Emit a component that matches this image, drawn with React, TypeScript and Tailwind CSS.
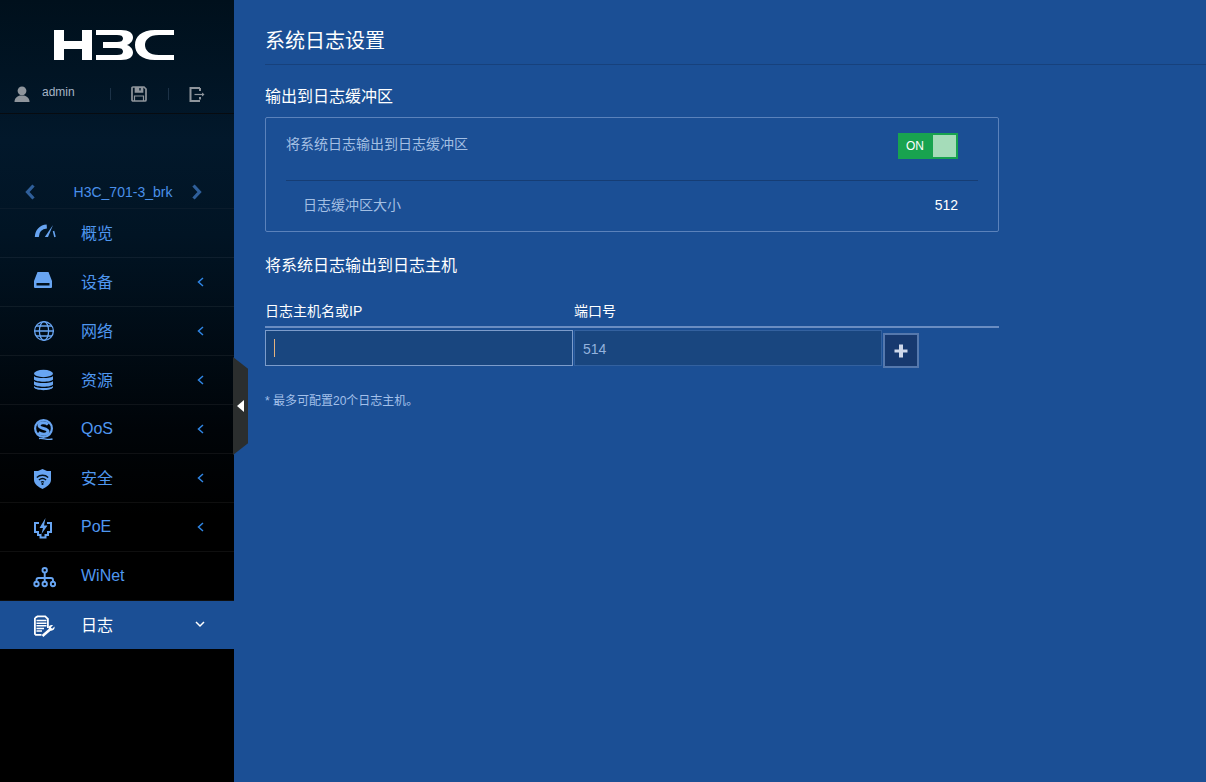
const font = "font-['Liberation_Sans','Noto_Sans_CJK_SC',sans-serif]";

function Chevron({ dir, className }: { dir: "left" | "down"; className?: string }) {
  const points = { left: "9,3 4.5,7 9,11", down: "3,5 7,9 11,5" }[dir];
  return (
    <svg viewBox="0 0 14 14" className={className} fill="none" stroke="currentColor" strokeWidth="1.5">
      <polyline points={points} />
    </svg>
  );
}

const icons: Record<string, React.ReactNode> = {
  gauge: (
    <>
      <path d="M4.8 16C5 10 9 6 14.8 5.6" fill="none" stroke="currentColor" strokeWidth="4" />
      <path d="M12.8 16L21 4 16 16Z" fill="currentColor" />
      <path d="M21.5 10L23 16" fill="none" stroke="currentColor" strokeWidth="1.5" />
    </>
  ),
  drive: (
    <path
      fill="currentColor"
      fillRule="evenodd"
      d="M5.5 2H16.5L20 11V17A1 1 0 0 1 19 18H3A1 1 0 0 1 2 17V11ZM4.5 13H17.5V15.5H4.5Z"
    />
  ),
  globe: (
    <g fill="none" stroke="currentColor" strokeWidth="1.3">
      <circle cx="12" cy="12" r="9.4" />
      <ellipse cx="12" cy="12" rx="4.6" ry="9.4" />
      <path d="M4 7H20M4 17H20M2.6 12H21.4" />
    </g>
  ),
  database: (
    <g fill="currentColor">
      <ellipse cx="11.5" cy="5.5" rx="9.5" ry="3.7" />
      <path d="M2 8C4 10.8 19 10.8 21 8V11.5C19 14.5 4 14.5 2 11.5Z" />
      <path d="M2 13C4 15.8 19 15.8 21 13V16.5C19 19.5 4 19.5 2 16.5Z" />
      <path d="M2 18C4 20.8 19 20.8 21 18V19.5C19 23 4 23 2 19.5Z" />
    </g>
  ),
  qos: (
    <g fill="none" stroke="currentColor">
      <circle cx="11.5" cy="11.5" r="8.4" strokeWidth="2.2" />
      <path d="M16 7.5C13.5 5 7 5.2 7 8.5C7 12 16 11 16 14.5C16 18 9.5 18 6.5 15.5" strokeWidth="3" />
      <path d="M7 21.5C11 20.5 15 23.5 20.5 22" strokeWidth="1.3" />
    </g>
  ),
  shield: (
    <>
      <path fill="currentColor" d="M10.5 3L15 5H19V14C19 18 14 21.5 10.5 23C7 21.5 2 18 2 14V5H6Z" />
      <g fill="none" stroke="#021018" strokeWidth="1.3">
        <path d="M4.8 11.5C8 8.5 13 8.5 16.2 11.5" />
        <path d="M6.9 14C9 12.2 12 12.2 14.1 14" />
        <path d="M9 16.2C10 15.5 11 15.5 12 16.2" />
      </g>
      <circle cx="10.5" cy="18" r="1.1" fill="#021018" />
    </>
  ),
  poe: (
    <>
      <path
        fill="none"
        stroke="currentColor"
        strokeWidth="2"
        d="M7 8H3V17H6V20H8.5V22.5H13.5V20H16V17H19V8H15"
      />
      <path fill="currentColor" d="M13.5 3L7.5 13H11L9.5 19L15.5 10.5H12Z" />
    </>
  ),
  winet: (
    <g fill="none" stroke="currentColor" strokeWidth="1.9">
      <circle cx="12.7" cy="6.2" r="2.2" />
      <path d="M12.7 8.4V17.8M4.5 17.8V16A2 2 0 0 1 6.5 14H19A2 2 0 0 1 21 16V17.8" />
      <circle cx="4.5" cy="20" r="2.2" />
      <circle cx="12.7" cy="20" r="2.2" />
      <circle cx="21" cy="20" r="2.2" />
    </g>
  ),
  log: (
    <>
      <path fill="none" stroke="#fff" strokeWidth="1.8" d="M2.9 5L5.5 3.4H13.2L15.9 6V15M9.5 21.9H3.8L2.9 21V5" />
      <path stroke="#fff" strokeWidth="1.5" d="M4.5 7.6H14.5M4.5 10.2H14.5M4.5 12.8H14.5M4.5 15.4H12M4.5 18H10" />
      <path stroke="#fff" strokeWidth="2.6" d="M10.5 23L18 16.5" />
      <path fill="#fff" d="M16.5 15C16.5 12.6 19 11.4 21 12.2L18.8 14.4L20.2 15.8L22.6 13.6C23 16.4 20.8 18.4 18 17.6Z" />
    </>
  ),
};

const menu = [
  { label: "概览", icon: "gauge", cjk: true },
  { label: "设备", icon: "drive", arrow: true, cjk: true },
  { label: "网络", icon: "globe", arrow: true, cjk: true },
  { label: "资源", icon: "database", arrow: true, cjk: true },
  { label: "QoS", icon: "qos", arrow: true },
  { label: "安全", icon: "shield", arrow: true, cjk: true },
  { label: "PoE", icon: "poe", arrow: true },
  { label: "WiNet", icon: "winet" },
];

function H3CLogo() {
  return (
    <svg viewBox="0 0 120 30" className="ml-[54px] h-[30px] w-[120px]" fill="#fff">
      <path d="M0 0H10V11H28V0H38V30H28V19H10V30H0Z" />
      <path d="M42 0H67C75 0 79 3 79 7.5C79 11 76 14 73 15C76 16 79 19 79 22.5C79 27 75 30 67 30H42V25H63C67 25 69 24 69 21.5C69 19 67 18 63 18H49V12H63C67 12 69 11 69 8.5C69 6 67 5 63 5H42Z" />
      <path d="M120 0H101C87 0 81 7 81 15C81 23 87 30 101 30H120V25H105C95 25 91 20 91 15C91 10 95 5 105 5H120Z" />
    </svg>
  );
}

function Sidebar() {
  return (
    <aside className="relative w-[234px] shrink-0 bg-[linear-gradient(180deg,#00101c_0%,#02182b_18%,#011424_30%,#000408_55%,#000000_66%)]">
      <div className="h-[114px] border-b border-[#070b10] pt-[30px]">
        <H3CLogo />
        <div className="mt-[25px] flex h-[18px] items-center text-[#8f959c]">
          <svg viewBox="0 0 16 16" className="ml-[14px] h-[16px] w-[16px]" fill="currentColor">
            <circle cx="8" cy="4.8" r="4.4" />
            <path d="M0.5 16C0.5 11.8 3.5 10.2 6 9.5H10C12.5 10.2 15.5 11.8 15.5 16Z" />
          </svg>
          <span className="mb-[5px] ml-[12px] w-[68px] text-[12px] text-[#a5b4c5]">admin</span>
          <span className="h-[12px] w-px bg-[#1c3247]" />
          <svg viewBox="0 0 16 16" className="ml-[20px] h-[16px] w-[16px]" fill="none" stroke="currentColor" strokeWidth="1.7">
            <path d="M1 2A1 1 0 0 1 2 1H13L15 3V14A1 1 0 0 1 14 15H2A1 1 0 0 1 1 14Z" />
            <path d="M4.5 1V6H11.5V1" fill="currentColor" />
            <path d="M3.5 15V10H12.5V15" strokeWidth="1.2" />
            <path d="M9 2V4.5" stroke="#021a2e" strokeWidth="1.4" />
          </svg>
          <span className="ml-[21px] h-[12px] w-px bg-[#1c3247]" />
          <svg viewBox="0 0 16 16" className="ml-[20px] h-[16px] w-[16px]" fill="none" stroke="currentColor" strokeWidth="2">
            <path d="M11 2H1.5V15H11M11 11V13.5M11 2V5" />
            <path d="M5.5 8.5H15" strokeWidth="1.2" />
            <path d="M13 6.5L15.5 8.5L13 10.5Z" fill="currentColor" stroke="none" />
          </svg>
        </div>
      </div>
      <div className="flex h-[95px] items-end border-b border-[#0b1c2c] pb-[6px] text-[#2f5f9a]">
        <svg viewBox="0 0 12 16" className="mb-[2px] ml-[24px] h-[16px] w-[12px]" fill="none" stroke="currentColor" strokeWidth="3.2">
          <polyline points="9.5,1.5 3.5,8 9.5,14.5" />
        </svg>
        <span className="ml-[37px] w-[100px] text-center text-[14px] leading-[20px] text-[#4a90ea]">H3C_701-3_brk</span>
        <svg viewBox="0 0 12 16" className="mb-[2px] ml-[18px] h-[16px] w-[12px]" fill="none" stroke="currentColor" strokeWidth="3.2">
          <polyline points="2.5,1.5 8.5,8 2.5,14.5" />
        </svg>
      </div>
      <nav>
        {menu.map((m) => (
          <div key={m.label} className="flex h-[49px] items-center border-b border-white/[0.06] pl-[32px] text-[16px] text-[#4f97f0]">
            <svg viewBox="0 0 24 24" className="h-[24px] w-[24px] text-[#68a5f2]">
              {icons[m.icon]}
            </svg>
            <span className={m.cjk ? "ml-[25px] flex-1 pt-[2px]" : "ml-[25px] flex-1"}>{m.label}</span>
            {m.arrow && <Chevron dir="left" className="mr-[26px] h-[14px] w-[14px] text-[#2f86e6]" />}
          </div>
        ))}
        <div className="flex h-[48px] items-center bg-[#1b4f95] pl-[32px] text-[16px] text-white">
          <svg viewBox="0 0 24 24" className="h-[24px] w-[24px]">
            {icons.log}
          </svg>
          <span className="ml-[25px] flex-1 pt-[2px]">日志</span>
          <Chevron dir="down" className="mb-[3px] mr-[27px] h-[14px] w-[14px]" />
        </div>
      </nav>
      <div className="absolute left-[-1px] top-[357px] ml-[234px] flex h-[98px] w-[15px] items-center bg-[#2b2e2e] [clip-path:polygon(0_0,100%_12%,100%_88%,0_100%)]">
        <span className="ml-[4px] h-0 w-0 border-y-[6px] border-r-[7px] border-y-transparent border-r-white" />
      </div>
    </aside>
  );
}

function Main() {
  return (
    <main className="flex-1 pl-[31px]">
      <div className="h-[65px] border-b border-[#17417c] pt-[27px] text-[20px] leading-[28px] text-white">系统日志设置</div>
      <div className="w-[734px]">
        <h2 className="mt-[20px] text-[16px] leading-[24px] text-white">输出到日志缓冲区</h2>
        <div className="mt-[8px] h-[115px] rounded-[2px] border border-[#5b82bb]">
          <div className="mx-[20px] flex h-[63px] items-start justify-between border-b border-[#163d74] pr-[20px] pt-[15px]">
            <span className="mt-px text-[14px] leading-[20px] text-[#a3bfe3]">将系统日志输出到日志缓冲区</span>
            <div className="flex h-[26px] w-[60px] items-center bg-[#18a34f] p-[2px]">
              <span className="ml-[6px] w-[27px] text-[12px] text-white">ON</span>
              <span className="h-[22px] flex-1 bg-[#a5dcb9]" />
            </div>
          </div>
          <div className="mx-[20px] flex h-[50px] items-center justify-between pb-[2px] pl-[17px] pr-[20px] text-[14px]">
            <span className="text-[#a3bfe3]">日志缓冲区大小</span>
            <span className="text-white">512</span>
          </div>
        </div>

        <h2 className="mt-[22px] text-[16px] leading-[24px] text-white">将系统日志输出到日志主机</h2>
        <div className="mt-[21px] flex h-[29px] border-b-2 border-[#6a8dc2] text-[14px] leading-[24px] text-white">
          <span className="w-[309px]">日志主机名或IP</span>
          <span>端口号</span>
        </div>
        <div className="mt-[2px] flex items-start">
          <div className="flex h-[36px] w-[308px] items-center border border-[#7c9ccb] bg-[#19467f] pl-[8px]">
            <span className="h-[18px] w-px bg-[#e4b27e]" />
          </div>
          <div className="ml-px flex h-[36px] w-[308px] items-center border border-[#33619f] bg-[#19467f] pl-[8px] pt-[2px] text-[14px] text-[#93b2dd]">514</div>
          <button className="ml-px mt-[3px] flex h-[35px] w-[36px] items-center justify-center border-2 border-[#5578ad] bg-[#17396f]">
            <svg viewBox="0 0 14 14" className="h-[14px] w-[14px]" fill="#cfd8ea">
              <path d="M5 0.5H9V5.5H13.5V8.5H9V13.5H5V8.5H0.5V5.5H5Z" />
            </svg>
          </button>
        </div>
        <p className="mt-[23px] text-[12px] leading-[20px] text-[#a3c0ea]">* 最多可配置20个日志主机。</p>
      </div>
    </main>
  );
}

export default function App() {
  return (
    <div className={`flex h-screen w-full overflow-hidden bg-[#1b4f95] ${font}`}>
      <Sidebar />
      <Main />
    </div>
  );
}
